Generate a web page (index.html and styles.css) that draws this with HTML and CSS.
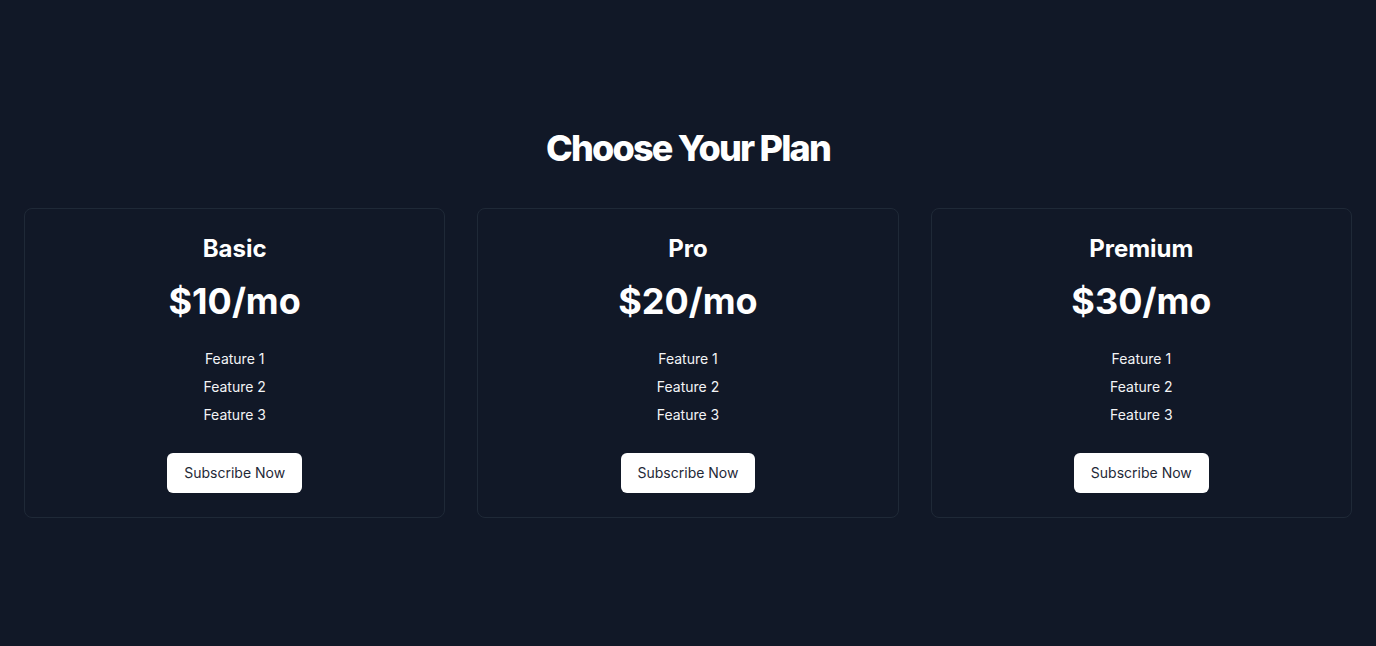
FILE: index.html
```html
<!DOCTYPE html>
<html lang="en">
<head>
<meta charset="utf-8">
<title>Pricing</title>
<link rel="stylesheet" href="styles.css">
</head>
<body>
<main class="page">
  <h1 class="title">Choose Your Plan</h1>
  <div class="plans">
    <section class="card">
      <h2 class="plan-name">Basic</h2>
      <p class="price">$10/mo</p>
      <ul class="features">
        <li>Feature 1</li>
        <li>Feature 2</li>
        <li>Feature 3</li>
      </ul>
      <button class="btn">Subscribe Now</button>
    </section>
    <section class="card">
      <h2 class="plan-name">Pro</h2>
      <p class="price">$20/mo</p>
      <ul class="features">
        <li>Feature 1</li>
        <li>Feature 2</li>
        <li>Feature 3</li>
      </ul>
      <button class="btn">Subscribe Now</button>
    </section>
    <section class="card">
      <h2 class="plan-name">Premium</h2>
      <p class="price">$30/mo</p>
      <ul class="features">
        <li>Feature 1</li>
        <li>Feature 2</li>
        <li>Feature 3</li>
      </ul>
      <button class="btn">Subscribe Now</button>
    </section>
  </div>
</main>
</body>
</html>
```

FILE: styles.css
```css
* { box-sizing: border-box; }
html, body { margin: 0; padding: 0; }
body {
  background: #111827;
  color: #ffffff;
  font-family: Inter, "Noto Sans", sans-serif;
}
.page {
  min-height: 646px;
  display: flex;
  flex-direction: column;
  justify-content: center;
  padding: 0 24px;
}
.title {
  margin: 0 0 40px;
  font-size: 36px;
  line-height: 40px;
  font-weight: 800;
  letter-spacing: -0.05em;
  text-align: center;
}
.plans {
  display: grid;
  grid-template-columns: repeat(3, 1fr);
  gap: 32px;
}
.card {
  border: 1px solid #1f2937;
  border-radius: 8px;
  padding: 24px;
  display: flex;
  flex-direction: column;
  align-items: center;
  text-align: center;
}
.plan-name {
  margin: 0;
  font-size: 24px;
  line-height: 32px;
  font-weight: 700;
}
.price {
  margin: 16px 0 0;
  font-size: 36px;
  line-height: 40px;
  font-weight: 700;
}
.features {
  list-style: none;
  margin: 24px 0 0;
  padding: 0;
  font-size: 14px;
  line-height: 28px;
  color: #f3f4f6;
}
.btn {
  margin-top: 24px;
  background: #ffffff;
  color: #1f2937;
  border: 0;
  border-radius: 6px;
  padding: 10px 17px;
  font-family: inherit;
  font-size: 14px;
  line-height: 20px;
  font-weight: 400;
}
```
